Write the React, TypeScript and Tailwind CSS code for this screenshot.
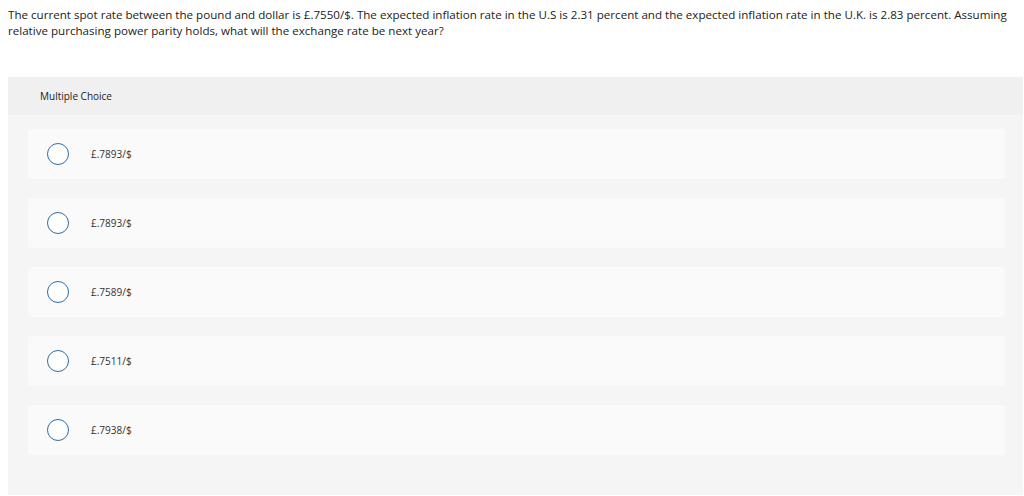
const options = ["£.7893/$", "£.7893/$", "£.7589/$", "£.7511/$", "£.7938/$"];

function Option({ label }: { label: string }) {
  return (
    <div className="flex items-center h-[50px] rounded bg-[#fafafa]">
      <span className="ml-[19px] w-[22px] h-[22px] rounded-full border border-[#2e6da4] bg-white shrink-0" />
      <span className="ml-[22px] text-[10px] text-[#333]">{label}</span>
    </div>
  );
}

export default function App() {
  return (
    <div className="min-h-screen bg-white pl-2 pt-[7px] font-['Open_Sans',Arial,sans-serif]">
      <p className="whitespace-nowrap text-[11.6px] leading-[16px] text-[#222]">
        The current spot rate between the pound and dollar is £.7550/$. The expected inflation rate in the U.S is 2.31
        percent and the expected inflation rate in the U.K. is 2.83 percent. Assuming
        <br />
        relative purchasing power parity holds, what will the exchange rate be next year?
      </p>
      <div className="mt-[38px] mr-[1px] bg-[#f5f5f5] pb-10">
        <div className="h-[38px] flex items-center pl-8 bg-[#f0f0f0] text-[10px] text-[#222]">Multiple Choice</div>
        <div className="pt-[14px] pl-5 pr-[18px] flex flex-col gap-[19px]">
          {options.map((o, i) => (
            <Option key={i} label={o} />
          ))}
        </div>
      </div>
    </div>
  );
}
